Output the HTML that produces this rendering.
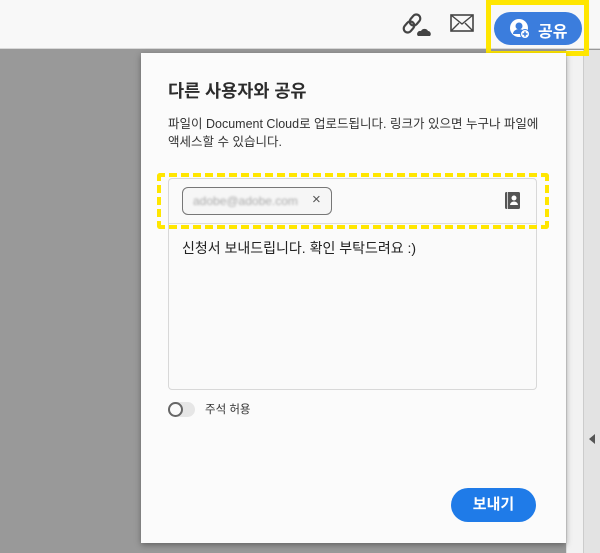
<!DOCTYPE html>
<html><head><meta charset="utf-8"><style>
*{margin:0;padding:0;box-sizing:border-box}
body{width:600px;height:553px;overflow:hidden;background:#999;position:relative;font-family:"Liberation Sans","Noto Sans CJK KR",sans-serif;color:#2c2c2c}
.top{position:absolute;left:0;top:0;width:600px;height:49px;background:#f8f8f8;border-bottom:1px solid #d8d8d8}
.strip1{position:absolute;left:566px;top:50px;width:17px;height:503px;background:#f2f2f2;border-left:1px solid #ddd}
.strip2{position:absolute;left:583px;top:50px;width:17px;height:503px;background:#e3e3e3;border-left:1px solid #ccc}
.dlg{position:absolute;left:141px;top:53px;width:425px;height:490px;background:#fbfbfb;box-shadow:0 2px 6px rgba(0,0,0,.35)}
.ybox{position:absolute;left:486px;top:0;width:103px;height:56px;border:5px solid #ffe600}
.share{position:absolute;left:494px;top:12px;width:88px;height:33px;border-radius:17px;background:#3b7ddd;color:#fff;font-size:16px;font-weight:bold}
</style></head><body>
<div class="top"></div>
<div class="strip1"></div><div class="strip2"></div>
<div style="position:absolute;left:589px;top:434px;width:0;height:0;border-top:5px solid transparent;border-bottom:5px solid transparent;border-right:6px solid #555"></div>
<svg style="position:absolute;left:402px;top:12px" width="30" height="26" viewBox="0 0 30 26"><g fill="none" stroke="#444" stroke-width="2.2"><rect x="9" y="2" width="8" height="12" rx="4" transform="rotate(40 13 8)"/><rect x="3" y="9" width="8" height="12" rx="4" transform="rotate(40 7 15)"/></g><path d="M16 24h12a3 3 0 0 0-2-5 4 4 0 0 0-7 0 3 3 0 0 0-3 5z" fill="#444"/></svg>
<svg style="position:absolute;left:450px;top:14px" width="24" height="18" viewBox="0 0 24 18"><rect x="1" y="1" width="22" height="16" fill="none" stroke="#444" stroke-width="1.6"/><path d="M1 1l11 9 11-9M1 17l8-8M23 17l-8-8" fill="none" stroke="#444" stroke-width="1.4"/></svg>
<div class="ybox"></div>
<div class="share"><svg style="position:absolute;left:16px;top:7px" width="20" height="20" viewBox="0 0 20 20"><circle cx="9" cy="9" r="9" fill="#fff"/><circle cx="9" cy="7" r="3.5" fill="#3b7ddd"/><path d="M3 15a6 5 0 0 1 12 0z" fill="#3b7ddd"/><circle cx="15" cy="15" r="4.5" fill="#fff" stroke="#3b7ddd"/><path d="M15 12.5v5M12.5 15h5" stroke="#3b7ddd" stroke-width="1.5"/></svg><span style="position:absolute;left:44px;top:6px">공유</span></div>
<div class="dlg">
<div style="position:absolute;left:27px;top:25px;font-size:17.5px;font-weight:bold;color:#2c2c2c">다른 사용자와 공유</div>
<div style="position:absolute;left:27px;top:62px;width:380px;font-size:12.5px;line-height:18px;color:#333">파일이 Document Cloud로 업로드됩니다. 링크가 있으면 누구나 파일에<br>액세스할 수 있습니다.</div>
<div style="position:absolute;left:27px;top:125px;width:369px;height:212px;border:1px solid #d8d8d8;border-radius:4px;background:#fafafa">
<div style="position:absolute;left:0;top:44px;width:367px;border-top:1px solid #ddd"></div>
<div style="position:absolute;left:13px;top:8px;width:150px;height:28px;border:1px solid #777;border-radius:6px;background:#f6f6f6"><span style="position:absolute;left:10px;top:6px;font-size:12px;color:#aaa;filter:blur(1px)">adobe@adobe.com</span><span style="position:absolute;left:129px;top:3px;font-size:15px;color:#555">×</span></div>
<svg style="position:absolute;left:336px;top:13px" width="15" height="17" viewBox="0 0 15 17"><rect x="0" y="0" width="15" height="17" rx="1.5" fill="#555"/><rect x="2" y="0" width="1" height="17" fill="#ccc"/><circle cx="9" cy="6" r="2.5" fill="#fff"/><path d="M5 13a4 3.5 0 0 1 8 0z" fill="#fff"/></svg>
<div style="position:absolute;left:13px;top:59px;font-size:14px;color:#222">신청서 보내드립니다. 확인 부탁드려요 :)</div>
</div>
<div style="position:absolute;left:16px;top:120px;width:392px;height:56px;border:4px dashed #ffe600;border-radius:3px"></div>
<div style="position:absolute;left:27px;top:349px;width:27px;height:15px;border-radius:8px;background:#e6e6e6"></div>
<div style="position:absolute;left:27px;top:349px;width:15px;height:15px;border-radius:50%;border:2px solid #666;background:#fafafa"></div>
<div style="position:absolute;left:64px;top:348px;font-size:11.5px;color:#333">주석 허용</div>
<div style="position:absolute;left:310px;top:435px;width:85px;height:34px;border-radius:17px;background:#1f7be8;color:#fff;font-size:15px;font-weight:bold;text-align:center;line-height:34px">보내기</div>
</div>
</body></html>
